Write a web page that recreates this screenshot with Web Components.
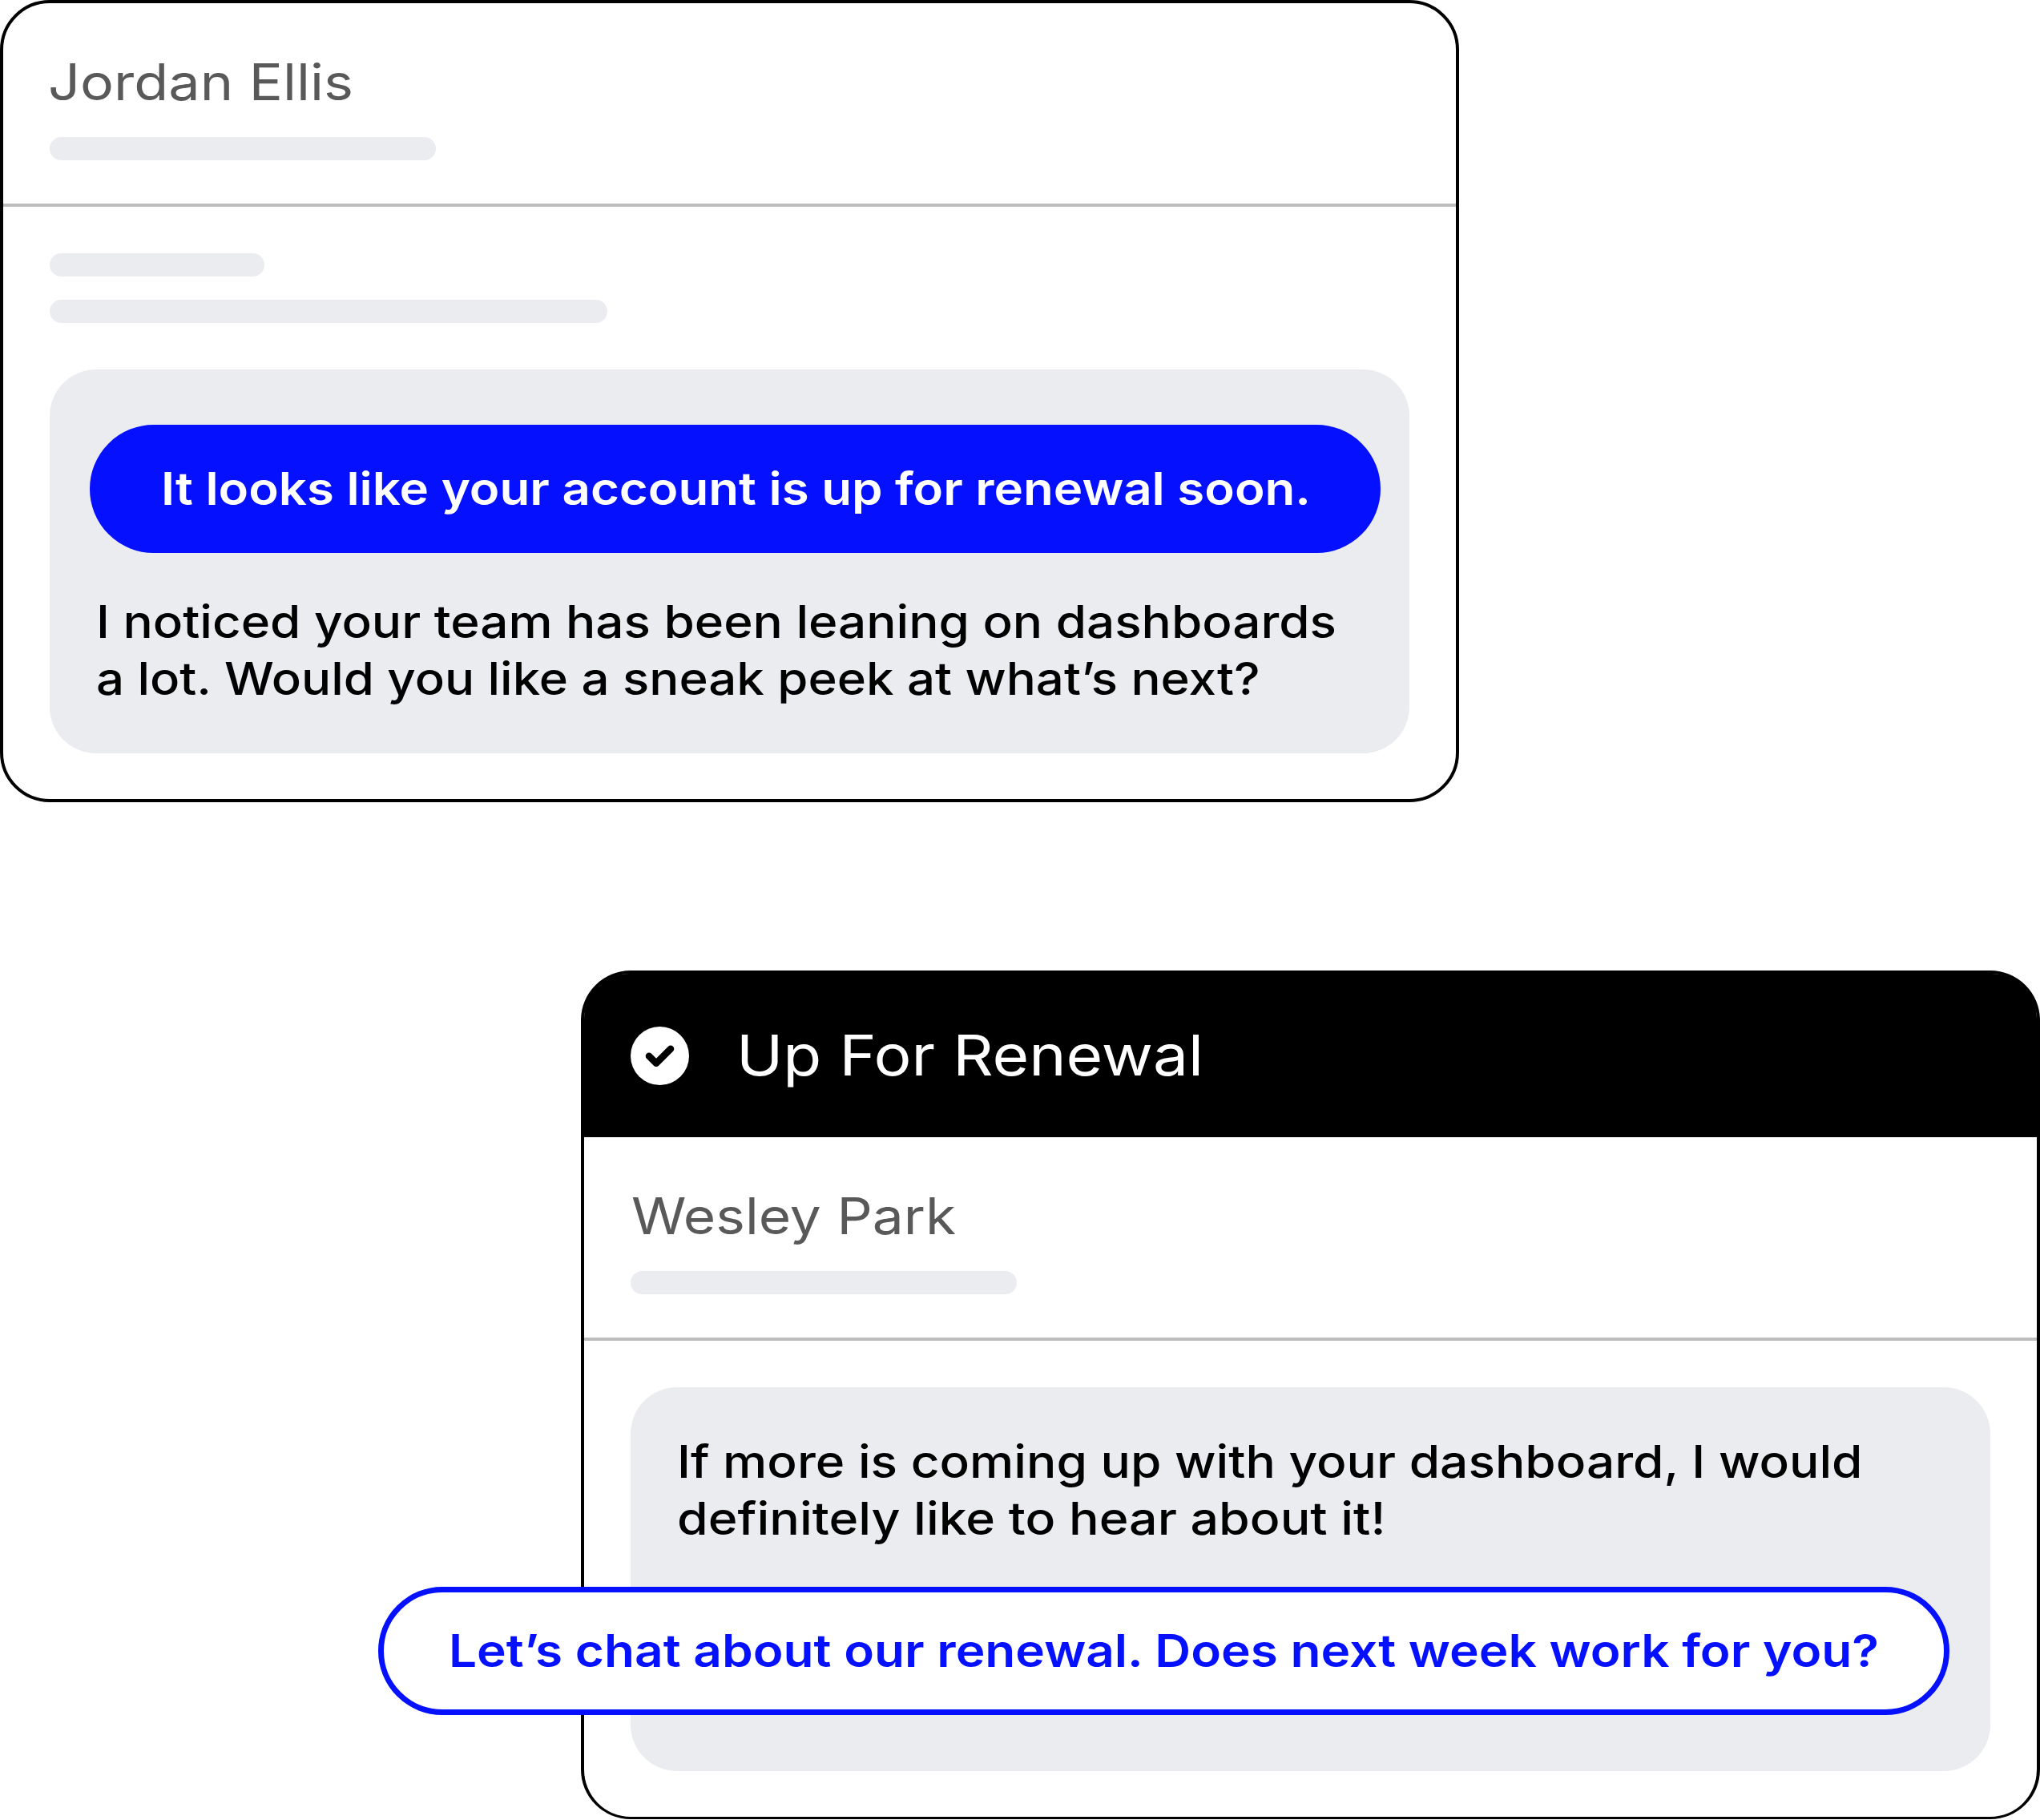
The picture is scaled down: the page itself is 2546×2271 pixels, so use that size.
<!DOCTYPE html>
<html lang="en">
<head>
<meta charset="utf-8">
<title>Renewal messages</title>
<style>
    :root {
        --ink: #000;
        --muted-ink: #595959;
        --fill: #ebecf0;
        --rule: #bdbdbd;
        --accent: #0510ff;
    }
    body {
        margin: 0;
        width: 2546px;
        height: 2271px;
        overflow: hidden;
        background: #fff;
        color: var(--ink);
        font-family: Inter, "Open Sans", sans-serif;
    }
</style>
</head>
<body>
<message-board>
    <message-card>
        <card-person slot="person">
            <fit-line width="381">Jordan Ellis</fit-line>
        </card-person>
        <skeleton-bar width="268"></skeleton-bar>
        <skeleton-bar width="696"></skeleton-bar>
        <message-box class="outgoing">
            <message-pill filled>
                <fit-line width="1435">It looks like your account is up for renewal soon.</fit-line>
            </message-pill>
            <fit-line width="1548">I noticed your team has been leaning on dashboards</fit-line>
            <fit-line width="1452.5">a lot. Would you like a sneak peek at what’s next?</fit-line>
        </message-box>
    </message-card>

    <message-card class="reply">
        <card-banner slot="banner">
            <fit-line width="583">Up For Renewal</fit-line>
        </card-banner>
        <card-person slot="person" class="flush">
            <fit-line width="405">Wesley Park</fit-line>
        </card-person>
        <message-box class="incoming">
            <fit-line width="1479.5">If more is coming up with your dashboard, I would</fit-line>
            <fit-line width="884.5">definitely like to hear about it!</fit-line>
            <message-pill>
                <fit-line width="1785">Let’s chat about our renewal. Does next week work for you?</fit-line>
            </message-pill>
        </message-box>
    </message-card>
</message-board>

<script>
// One line of text, stretched to the given width in px
class FitLine extends HTMLElement {
    constructor() {
        super();
        this.attachShadow({ mode: 'open' });
        this.shadowRoot.innerHTML = `
            <style>
                :host { display: block; white-space: nowrap; font-variant-ligatures: no-common-ligatures; }
                span { display: inline-block; vertical-align: top; transform-origin: 0 50%; }
            </style>
            <span><slot></slot></span>
        `;
    }

    connectedCallback() {
        const width = Number(this.getAttribute('width'));
        const span = this.shadowRoot.querySelector('span');
        this.style.width = `${width}px`;
        span.style.transform = `scaleX(${width / span.getBoundingClientRect().width})`;
    }
}

class SkeletonBar extends HTMLElement {
    constructor() {
        super();
        this.attachShadow({ mode: 'open' });
        this.shadowRoot.innerHTML = `
            <style>
                :host { display: block; height: 29px; border-radius: 14.5px; background: var(--fill); }
            </style>
        `;
    }

    connectedCallback() {
        this.style.width = `${this.getAttribute('width')}px`;
    }
}

class CardBanner extends HTMLElement {
    constructor() {
        super();
        this.attachShadow({ mode: 'open' });
        this.shadowRoot.innerHTML = `
            <style>
                :host {
                    display: flex;
                    align-items: center;
                    gap: 59px;
                    box-sizing: border-box;
                    height: 204px;
                    padding-left: 58px;
                    background: #000;
                    color: #fff;
                    font-size: 70px;
                    font-weight: 400;
                    line-height: 84px;
                }
                svg { display: block; width: 73px; height: 73px; }
            </style>
            <svg viewBox="0 0 73 73">
                <circle cx="36.5" cy="36.5" r="36.5" fill="#fff"/>
                <path d="M23 36.7l9 9 18-18" fill="none" stroke="#000" stroke-width="8.6" stroke-linecap="round" stroke-linejoin="round"/>
            </svg>
            <slot></slot>
        `;
    }
}

class CardPerson extends HTMLElement {
    constructor() {
        super();
        this.attachShadow({ mode: 'open' });
        this.shadowRoot.innerHTML = `
            <style>
                :host {
                    display: flex;
                    flex-direction: column;
                    gap: 31px;
                    box-sizing: border-box;
                    height: 254px;
                    padding: 60px 0 0 58px;
                    border-bottom: 4px solid var(--rule);
                    color: var(--muted-ink);
                    font-size: 63px;
                    font-weight: 400;
                    line-height: 76px;
                }
                slot { display: block; margin-left: -2px; }
                :host(.flush) slot { margin-left: 1px; }
            </style>
            <slot></slot>
            <skeleton-bar width="482"></skeleton-bar>
        `;
    }
}

class MessagePill extends HTMLElement {
    constructor() {
        super();
        this.attachShadow({ mode: 'open' });
        this.shadowRoot.innerHTML = `
            <style>
                :host {
                    display: flex;
                    align-items: center;
                    justify-content: center;
                    box-sizing: border-box;
                    height: 160px;
                    border: 7px solid var(--accent);
                    border-radius: 80px;
                    background: #fff;
                    color: var(--accent);
                    font-weight: 600;
                }
                :host([filled]) { padding-left: 2px; background: var(--accent); color: #fff; }
            </style>
            <slot></slot>
        `;
    }
}

class MessageBox extends HTMLElement {
    constructor() {
        super();
        this.attachShadow({ mode: 'open' });
        this.shadowRoot.innerHTML = `
            <style>
                :host {
                    display: block;
                    box-sizing: border-box;
                    height: 479px;
                    border-radius: 58px;
                    background: var(--fill);
                    font-size: 56px;
                    font-weight: 500;
                    line-height: 71px;
                }
                :host(.outgoing) { margin-top: 29px; padding: 69px 0 0 58px; }
                :host(.incoming) { padding: 58px 0 0 58px; }
                :host(.outgoing) ::slotted(message-pill) { width: 1611px; margin: 0 0 51px -8px; }
                :host(.incoming) ::slotted(message-pill) { width: 1961px; margin: 49px 0 0 -373px; }
            </style>
            <slot></slot>
        `;
    }
}

class MessageCard extends HTMLElement {
    constructor() {
        super();
        this.attachShadow({ mode: 'open' });
        this.shadowRoot.innerHTML = `
            <style>
                :host {
                    display: block;
                    box-sizing: border-box;
                    width: 1821px;
                    border: 4px solid var(--ink);
                    border-radius: 62px;
                    background: #fff;
                }
                :host(.reply) { border-bottom-width: 3px; }
                /* slightly tighter than the inner edge, so no white shows at the corners */
                ::slotted(card-banner) { border-radius: 56px 56px 0 0; }
                .body { display: flex; flex-direction: column; gap: 29px; padding: 58px; }
            </style>
            <slot name="banner"></slot>
            <slot name="person"></slot>
            <div class="body"><slot></slot></div>
        `;
    }
}

class MessageBoard extends HTMLElement {
    constructor() {
        super();
        this.attachShadow({ mode: 'open' });
        this.shadowRoot.innerHTML = `
            <style>
                :host { display: flex; flex-direction: column; justify-content: space-between; height: 2270px; }
                ::slotted(message-card) { height: 1001px; }
                ::slotted(.reply) { height: 1059px; align-self: flex-end; }
            </style>
            <slot></slot>
        `;
    }
}

customElements.define('message-board', MessageBoard);
customElements.define('message-card', MessageCard);
customElements.define('card-banner', CardBanner);
customElements.define('card-person', CardPerson);
customElements.define('message-box', MessageBox);
customElements.define('message-pill', MessagePill);
customElements.define('skeleton-bar', SkeletonBar);
customElements.define('fit-line', FitLine);
</script>
</body>
</html>
